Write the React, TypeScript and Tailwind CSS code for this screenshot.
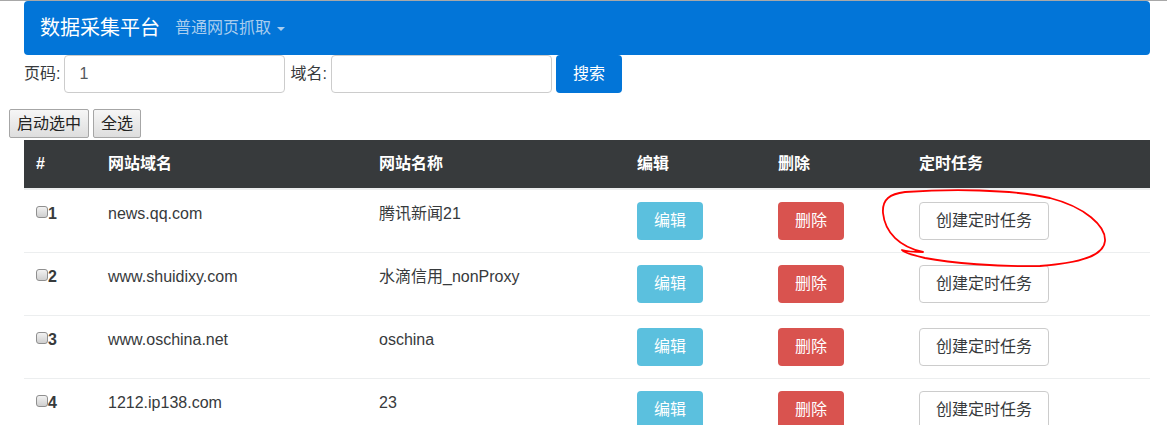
import React from "react";

const rows = [
  { id: 1, domain: "news.qq.com", name: "腾讯新闻21" },
  { id: 2, domain: "www.shuidixy.com", name: "水滴信用_nonProxy" },
  { id: 3, domain: "www.oschina.net", name: "oschina" },
  { id: 4, domain: "1212.ip138.com", name: "23" },
];

const font = {
  fontFamily: '"Liberation Sans", "Noto Sans CJK SC", sans-serif',
};

export default function App() {
  return (
    <div
      className="relative w-[1167px] h-[425px] overflow-hidden bg-white text-[16px] leading-[24px] text-[#373a3c] border-t border-[#a8a8a8]"
      style={font}
    >
      {/* navbar */}
      <div className="ml-[24px] w-[1126px] h-[54px] bg-[#0275d8] rounded-[4px] flex items-center px-[16px]">
        <span className="text-white text-[20px] leading-[30px] mr-[15px]">数据采集平台</span>
        <span className="text-[#a9cdee] text-[16px] flex items-center">
          普通网页抓取
          <span className="ml-[6px] mt-[2px] w-0 h-0 border-l-[4px] border-r-[4px] border-t-[4px] border-l-transparent border-r-transparent border-t-[#a9cdee]" />
        </span>
      </div>

      {/* search form */}
      <div className="ml-[24px] flex items-center h-[38px]">
        <span className="mr-[4px]">页码:</span>
        <div className="w-[221px] h-[38px] border border-[#cccccc] rounded-[4px] px-[14px] flex items-center text-[#55595c]">
          1
        </div>
        <span className="ml-[5px] mr-[4px]">域名:</span>
        <div className="w-[221px] h-[38px] border border-[#cccccc] rounded-[4px]" />
        <button className="ml-[4px] w-[66px] h-[38px] bg-[#0275d8] rounded-[4px] text-white">
          搜索
        </button>
      </div>

      {/* action buttons */}
      <div className="mt-[16px] ml-[9px] flex gap-[4px]">
        <button className="h-[29px] w-[80px] border border-[#a6a6a6] rounded-[2px] bg-gradient-to-b from-[#f6f6f6] to-[#dedede] text-[#222]">
          启动选中
        </button>
        <button className="h-[29px] w-[48px] border border-[#a6a6a6] rounded-[2px] bg-gradient-to-b from-[#f6f6f6] to-[#dedede] text-[#222]">
          全选
        </button>
      </div>

      {/* table */}
      <div className="mt-[2px] ml-[24px] w-[1126px]">
        <div className="flex h-[48px] items-center bg-[#373a3c] text-white font-bold border-b-2 border-[#eceeef] box-content">
          <div className="w-[72px] pl-[12px]">#</div>
          <div className="w-[271px] pl-[12px]">网站域名</div>
          <div className="w-[258px] pl-[12px]">网站名称</div>
          <div className="w-[141px] pl-[12px]">编辑</div>
          <div className="w-[141px] pl-[12px]">删除</div>
          <div className="flex-1 pl-[12px]">定时任务</div>
        </div>
        {rows.map((r) => (
          <div key={r.id} className="flex h-[63px] border-b border-[#eceeef] text-[#373a3c]">
            <div className="w-[72px] pl-[12px] pt-[12px] flex items-start">
              <span className="flex items-center h-[24px]">
                <span className="inline-block w-[12px] h-[12px] rounded-[3px] border border-[#8f8f8f] bg-gradient-to-b from-[#f2f2f2] to-[#cfcfcf] -mt-[4px]" />
                <b>{r.id}</b>
              </span>
            </div>
            <div className="w-[271px] pl-[12px] pt-[12px]">{r.domain}</div>
            <div className="w-[258px] pl-[12px] pt-[12px]">{r.name}</div>
            <div className="w-[141px] pl-[12px] pt-[12px]">
              <button className="w-[66px] h-[38px] rounded-[4px] bg-[#5bc0de] text-white">编辑</button>
            </div>
            <div className="w-[141px] pl-[12px] pt-[12px]">
              <button className="w-[66px] h-[38px] rounded-[4px] bg-[#d9534f] text-white">删除</button>
            </div>
            <div className="flex-1 pl-[12px] pt-[12px]">
              <button className="w-[130px] h-[38px] rounded-[4px] bg-white border border-[#cccccc] text-[#373a3c]">
                创建定时任务
              </button>
            </div>
          </div>
        ))}
      </div>

      {/* hand-drawn red circle annotation */}
      <svg className="absolute left-0 top-0 pointer-events-none" width="1167" height="425">
        <path
          d="M 923 251 C 900 246, 885 232, 883 212 C 882 198, 890 193, 905 191 C 950 188, 1010 188, 1050 197 C 1085 206, 1106 225, 1105 240 C 1104 255, 1080 262, 1040 265 C 1000 266, 950 262, 925 257 C 912 254, 904 252, 902 249 C 908 251, 915 251, 923 251"
          fill="none"
          stroke="#ff0000"
          strokeWidth="1.8"
          strokeLinecap="round"
          strokeLinejoin="round"
        />
      </svg>
    </div>
  );
}
